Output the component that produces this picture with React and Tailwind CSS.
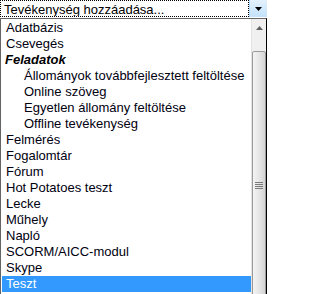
import React from 'react'

const items = [
  { label: 'Adatbázis' },
  { label: 'Csevegés' },
  { label: 'Feladatok', group: true },
  { label: 'Állományok továbbfejlesztett feltöltése', sub: true },
  { label: 'Online szöveg', sub: true },
  { label: 'Egyetlen állomány feltöltése', sub: true },
  { label: 'Offline tevékenység', sub: true },
  { label: 'Felmérés' },
  { label: 'Fogalomtár' },
  { label: 'Fórum' },
  { label: 'Hot Potatoes teszt' },
  { label: 'Lecke' },
  { label: 'Műhely' },
  { label: 'Napló' },
  { label: 'SCORM/AICC-modul' },
  { label: 'Skype' },
  { label: 'Teszt', selected: true },
]

const Row = ({ item }) => {
  let cls = 'h-4 leading-4 whitespace-nowrap pr-1 '
  if (item.group) cls += 'pl-[3px] font-bold italic text-black'
  else if (item.sub) cls += 'pl-[22px] text-[#000010]'
  else cls += 'pl-1 text-[#000010]'
  if (item.selected) cls += ' bg-[#3399ff] !text-white'
  return <div className={cls}>{item.label}</div>
}

const App = () => {
  return (
    <div className="w-[269px] h-[294px] overflow-hidden bg-white text-[13px] font-['Liberation_Sans',Arial,sans-serif]">
      {/* closed select */}
      <div className="flex h-[17px] w-[267px]">
        <div className="flex-1 border border-dotted border-black leading-4 pl-[3px] pt-px text-black whitespace-nowrap overflow-hidden">
          Tevékenység hozzáadása...
        </div>
        <div className="w-[18px] flex items-center justify-center bg-gradient-to-b from-[#e3f1fd] to-[#c3e1fb] border-l border-[#b7d8f5]">
          <svg width="7" height="4" viewBox="0 0 7 4">
            <path d="M0 0h7L3.5 4z" fill="#000" />
          </svg>
        </div>
      </div>

      {/* open list */}
      <div className="mt-px flex w-[267px] h-[300px] border-l border-r border-t border-l-[#646464] border-r-black border-t-[#646464]">
        <div className="flex-1 pt-px pl-px overflow-hidden">
          {items.map((item, i) => (
            <Row key={i} item={item} />
          ))}
        </div>
        <div className="w-[15px] flex flex-col bg-[#f0f0f0] border-l border-[#e3e3e3]">
          <div className="h-[17px] flex items-center justify-center">
            <svg width="7" height="4" viewBox="0 0 7 4">
              <path d="M3.5 0L7 4H0z" fill="#606060" />
            </svg>
          </div>
          <div className="h-[15px]" />
          <div className="flex-1 rounded-[2px] border border-[#9a9a9a] bg-gradient-to-r from-[#f4f4f4] via-[#e6e6e6] to-[#d4d4d4] flex flex-col items-center pt-[130px] gap-px">
            <div className="w-[8px] h-px bg-[#7a7a7a]" />
            <div className="w-[8px] h-px bg-[#7a7a7a]" />
            <div className="w-[8px] h-px bg-[#7a7a7a]" />
            <div className="w-[8px] h-px bg-[#7a7a7a]" />
          </div>
        </div>
      </div>
    </div>
  )
}

export default App
